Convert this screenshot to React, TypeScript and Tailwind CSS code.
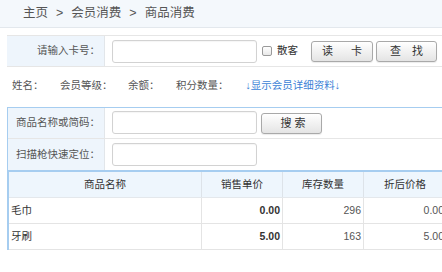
import React from 'react';

const rows = [
  { name: '毛巾', price: '0.00', stock: '296', discount: '0.00' },
  { name: '牙刷', price: '5.00', stock: '163', discount: '5.00' },
];

const btn =
  'h-[21px] rounded-[3px] border border-[#a9a9a9] bg-gradient-to-b from-white to-[#e4e4e4] text-[#333] text-[11px] shadow-[0_1px_1px_rgba(0,0,0,0.08)] flex items-center';

const input = 'h-[23px] w-[145px] rounded-[3px] border border-[#d2d2d2] bg-white shadow-[inset_0_1px_1px_rgba(0,0,0,0.04)]';

export default function App() {
  return (
    <div className="w-[442px] h-[272px] overflow-hidden bg-white text-[10.5px] text-[#555] font-['Liberation_Sans','Noto_Sans_CJK_SC',sans-serif]">
      {/* 面包屑 */}
      <div className="h-[28px] bg-[#f4f8fc] border-b border-[#e3e8ed] flex items-center pl-[23px] text-[12.5px] text-[#555]">
        <span>主页</span>
        <span className="mx-[8px]">&gt;</span>
        <span>会员消费</span>
        <span className="mx-[8px]">&gt;</span>
        <span>商品消费</span>
      </div>

      {/* 读卡 */}
      <div className="mt-[7px] ml-[7px] w-[450px] h-[32px] flex border-y border-[#e6e6e6]">
        <div className="w-[98px] bg-[#eef5fc] border-r border-[#e2e6ea] flex items-center justify-end pr-[4px]">
          请输入卡号：
        </div>
        <div className="flex items-center pl-[7px]">
          <div className={input + ' h-[22px]'} />
          <div className="ml-[5px] w-[10px] h-[10px] rounded-[2px] border border-[#9a9a9a] bg-gradient-to-b from-white to-[#e8e8e8]" />
          <span className="ml-[5px] text-[#333]">散客</span>
          <button className={btn + ' ml-[13px] w-[62px] justify-between px-[10px]'}>
            <span>读</span>
            <span>卡</span>
          </button>
          <button className={btn + ' ml-[3px] w-[61px] justify-between px-[13px]'}>
            <span>查</span>
            <span>找</span>
          </button>
        </div>
      </div>

      {/* 会员信息 */}
      <div className="h-[40px] flex items-center pb-[2px] text-[#555]">
        <span className="ml-[12px]">姓名：</span>
        <span className="ml-[16.5px]">会员等级：</span>
        <span className="ml-[15.5px]">余额：</span>
        <span className="ml-[16.5px]">积分数量：</span>
        <span className="ml-[17px] text-[#3b7fd6]">↓显示会员详细资料↓</span>
      </div>

      {/* 商品查询 */}
      <div className="ml-[7px] w-[450px] border-t border-l border-[#a6cdf0]">
        <div className="h-[31px] flex border-b border-[#e6e6e6]">
          <div className="w-[97px] bg-[#eef5fc] border-r border-[#e2e6ea] flex items-center justify-end pr-[4px]">
            商品名称或简码：
          </div>
          <div className="flex items-center pl-[7px] pb-[2px]">
            <div className={input} />
            <button className={btn + ' ml-[4px] mt-[3px] w-[61px] h-[20px] justify-center pl-[3px]'}>
              搜 索
            </button>
          </div>
        </div>
        <div className="h-[31px] flex">
          <div className="w-[97px] bg-[#eef5fc] border-r border-[#e2e6ea] flex items-center justify-end pr-[4px]">
            扫描枪快速定位：
          </div>
          <div className="flex items-center pl-[7px]">
            <div className={input} />
          </div>
        </div>
      </div>

      {/* 表格 */}
      <div className="ml-[7px] w-[450px] border-t-2 border-l-2 border-[#a6cdf0]">
        <div className="grid grid-cols-[193px_81px_81px_83px] h-[26px] bg-[#eef6fd] border-b border-[#e4e8ec] text-[#333]">
          <div className="flex items-center justify-center border-r border-[#dde3e9]">商品名称</div>
          <div className="flex items-center justify-center border-r border-[#dde3e9]">销售单价</div>
          <div className="flex items-center justify-center border-r border-[#dde3e9]">库存数量</div>
          <div className="flex items-center justify-center border-r border-[#dde3e9]">折后价格</div>
        </div>
        {rows.map((r) => (
          <div key={r.name} className="grid grid-cols-[193px_81px_81px_83px] h-[26px] border-b border-[#e4e4e4] text-[#333]">
            <div className="flex items-center pl-[2px] border-r border-[#e4e4e4]">{r.name}</div>
            <div className="flex items-center justify-end pr-[2px] font-bold border-r border-[#e4e4e4]">{r.price}</div>
            <div className="flex items-center justify-end pr-[2px] text-[#555] border-r border-[#e4e4e4]">{r.stock}</div>
            <div className="flex items-center justify-end pr-[2px] text-[#555] border-r border-[#e4e4e4]">{r.discount}</div>
          </div>
        ))}
      </div>
    </div>
  );
}
